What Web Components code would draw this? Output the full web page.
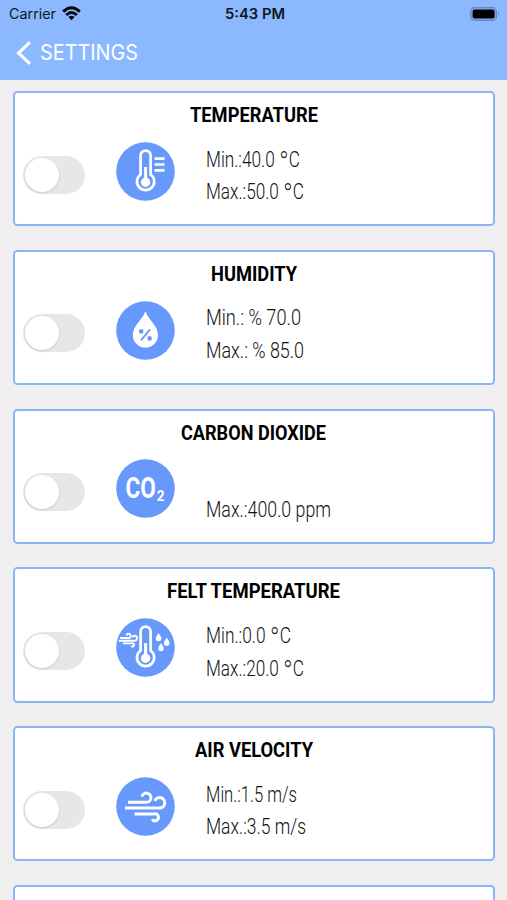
<!DOCTYPE html>
<html lang="en">
<head>
<meta charset="utf-8">
<title>Settings</title>
<style>
html,body{margin:0;height:100%;overflow:hidden;background:#efefef}
body{font-family:Roboto,"Liberation Sans",sans-serif;color:#111}
</style>
</head>
<body>
<settings-screen></settings-screen>
<script>
const define = (name, html, init) => {
  const t = document.createElement('template');
  t.innerHTML = html;
  customElements.define(name, class extends HTMLElement {
    connectedCallback() {
      if (this.shadowRoot) return;
      this.attachShadow({ mode: 'open' }).append(t.content.cloneNode(true));
      if (init) init(this, this.shadowRoot);
    }
  });
};

/* Condenses or expands one line of text to the given width. */
define('fit-text', `<style>
:host{display:block;white-space:nowrap}
span{display:inline-block;transform-origin:0 50%}
::slotted(b){font-weight:200;font-size:1.5em;line-height:0;vertical-align:-.2em}
</style><span><slot></slot></span>`, (el, root) => {
  const s = root.querySelector('span'), w = parseFloat(el.getAttribute('width'));
  el.style.width = w + 'px';
  s.style.transform = `scaleX(${w / s.getBoundingClientRect().width})`;
});

define('status-bar', `<style>
:host{display:grid;grid-template-columns:1fr auto 1fr;align-items:center;height:28px;padding:0 7px 0 9px;font:14px/28px Inter,sans-serif;color:#101820}
.l{display:flex;align-items:center;gap:6px}
.t{font-weight:600}
.b{justify-self:end}
svg{display:block}
.l svg{margin-top:-1px}
.b{margin-top:-1px}
</style>
<div class="l"><fit-text width="47">Carrier</fit-text>
<svg width="19" height="15" viewBox="0 0 19 15" fill="none" stroke="#05080d" stroke-width="2.9"><path d="M1.2 5.6Q9.5-2 17.8 5.6M4.2 9Q9.5 4.2 14.8 9"/><path d="M6.4 11.1Q9.5 8.5 12.6 11.1L9.5 14.3Z" fill="#05080d" stroke="none"/></svg></div>
<fit-text class="t" width="60">5:43 PM</fit-text>
<svg class="b" width="30" height="14" viewBox="0 0 30 14"><rect x=".7" y=".7" width="25.8" height="12.6" rx="3.8" fill="#83a9e4" stroke="#6589bd" stroke-width="1.2"/><rect x="2.6" y="2.5" width="22" height="9" rx="2" fill="#000"/><path d="M28 4.9Q30.2 7 28 9.1Z" fill="#6589bd"/></svg>`);

define('nav-bar', `<style>
:host{display:flex;align-items:center;gap:8px;height:51.5px;padding:0 0 2.5px 16px;box-sizing:border-box;color:#fff;font:21px/49px Inter,sans-serif;font-weight:400}
svg{display:block}
</style><svg width="16" height="24" viewBox="0 0 16 24" fill="none" stroke="#fff" stroke-width="3.1"><path d="M14 1.2 2.5 12 14 22.8"/></svg><fit-text width="98"><slot></slot></fit-text>`);

define('toggle-switch', `<style>
:host{display:block;box-sizing:border-box;width:62px;height:38px;border-radius:19px;background:#e7e7e9;padding:2px 1.5px}
i{display:block;width:34px;height:34px;border-radius:50%;background:#fff;box-shadow:0 1px 2.5px #0002}
</style><i></i>`);

const thermo = `<path d="M24.6 32.5V13.6a5 5 0 0 1 10 0V32.5a8.6 8.6 0 1 1-10 0Z" fill="none" stroke="#fff" stroke-width="2.7"/><path d="M29.6 25V40" stroke="#fff" stroke-width="3" fill="none"/><circle cx="29.6" cy="40.3" r="4.7" fill="#fff"/>`;
const wind = `<g fill="none" stroke="#fff"><path d="M12 25.3H30.5A4.6 4.6 0 1 0 25.9 19.6M9 31H43.5A5.2 5.2 0 1 0 38.8 23.8M18.5 36.9H38.2A3.5 3.5 0 1 1 36.1 42.4"/></g>`;
const drop = (x, y) => `<path transform="translate(${x} ${y})" d="M0-4.2C1-2.1 2.8-.5 2.8 1.2A2.8 2.8 0 0 1-2.8 1.2C-2.8-.5-1-2.1 0-4.2Z" fill="#fff"/>`;
const art = {
  temperature: thermo + `<path d="M38.5 16.7H48.5M38.5 22.5H48.5M38.5 28.3H48.5" stroke="#fff" stroke-width="2.7"/>`,
  humidity: `<path d="M29.4 10.3C32.5 19 42 24.8 42 34A12.6 12.6 0 0 1 16.8 34C16.8 24.8 26.3 19 29.4 10.3Z" fill="#fff"/><g fill="#6699fb" stroke="#6699fb"><circle cx="25.2" cy="30.4" r="1.6" stroke-width="1.4"/><circle cx="33.6" cy="37.4" r="1.6" stroke-width="1.4"/><path d="M34 28.4 25 39.4" stroke-width="1.8"/></g>`,
  co2: `<g fill="#fff" font-family="Roboto,sans-serif" font-weight="700"><text x="9.4" y="38.9" font-size="29" textLength="30.4" lengthAdjust="spacingAndGlyphs">CO</text><text x="40.8" y="41.5" font-size="15" textLength="7.8" lengthAdjust="spacingAndGlyphs">2</text></g>`,
  felt: thermo + `<g transform="translate(-1.4 8.4) scale(.46)" stroke-width="4.2">${wind}</g>` + drop(42.6, 19.3) + drop(50.7, 23.7) + drop(45, 29.3),
  wind: `<g stroke-width="3">${wind}</g>`
};
define('metric-icon', `<style>:host{display:block;width:59px;height:59px}svg{display:block}</style><div></div>`, (el, root) => {
  root.querySelector('div').innerHTML = `<svg width="59" height="59" viewBox="0 0 59 59"><circle cx="29.5" cy="29.5" r="29.3" fill="#6699fb"/>${art[el.getAttribute('kind')]}</svg>`;
});

define('setting-card', `<style>
:host{display:block;box-sizing:border-box;height:135.3px;border:2px solid #8cb5f6;border-radius:4.5px;background:#fff}
.title{display:flex;justify-content:center;height:44px;padding-right:1px;font-size:21px;font-weight:700;line-height:45.5px;color:#000}
.row{display:grid;grid-template-columns:62px 59px 1fr;column-gap:30.5px;padding-left:8.2px}
toggle-switch{margin-top:18.5px}
.icon{margin-top:4.8px}
.values{display:flex;flex-direction:column;justify-content:flex-end;height:76px;margin-left:.4px;font-size:21.5px;font-weight:300;line-height:32.7px;box-sizing:border-box;padding-bottom:4px}
</style>
<div class="title"><slot name="title"></slot></div>
<div class="row"><toggle-switch></toggle-switch><div class="icon"></div><div class="values"><slot></slot></div></div>`, (el, root) => {
  const icon = document.createElement('metric-icon');
  icon.setAttribute('kind', el.getAttribute('kind'));
  root.querySelector('.icon').append(icon);
});

define('settings-screen', `<style>
:host{display:block;height:900px;overflow:hidden;background:#efefef}
header{background:#8bb8ff}
main{display:flex;flex-direction:column;gap:23.5px;padding:11.5px 12px 0 13px}
setting-card{flex:none}
</style>
<header><status-bar></status-bar><nav-bar>SETTINGS</nav-bar></header><main></main>`, (el, root) => {
  const data = [
    ['temperature', 'TEMPERATURE', 128, ['Min.:40.0 <b>°</b>C', 94], ['Max.:50.0 <b>°</b>C', 98]],
    ['humidity', 'HUMIDITY', 86, ['Min.: % 70.0', 95], ['Max.: % 85.0', 98]],
    ['co2', 'CARBON DIOXIDE', 145, ['Max.:400.0 ppm', 125]],
    ['felt', 'FELT TEMPERATURE', 173, ['Min.:0.0 <b>°</b>C', 85], ['Max.:20.0 <b>°</b>C', 98]],
    ['wind', 'AIR VELOCITY', 118, ['Min.:1.5 m/s', 91], ['Max.:3.5 m/s', 100]],
    ['temperature', '', 0]
  ];
  const main = root.querySelector('main');
  for (const [kind, title, width, ...values] of data) {
    const card = document.createElement('setting-card');
    card.setAttribute('kind', kind);
    main.append(card);
    if (title) card.innerHTML = `<fit-text slot="title" width="${width}">${title}</fit-text>` +
      values.map(([v, w]) => `<fit-text width="${w}">${v}</fit-text>`).join('');
  }
});
</script>
</body>
</html>
